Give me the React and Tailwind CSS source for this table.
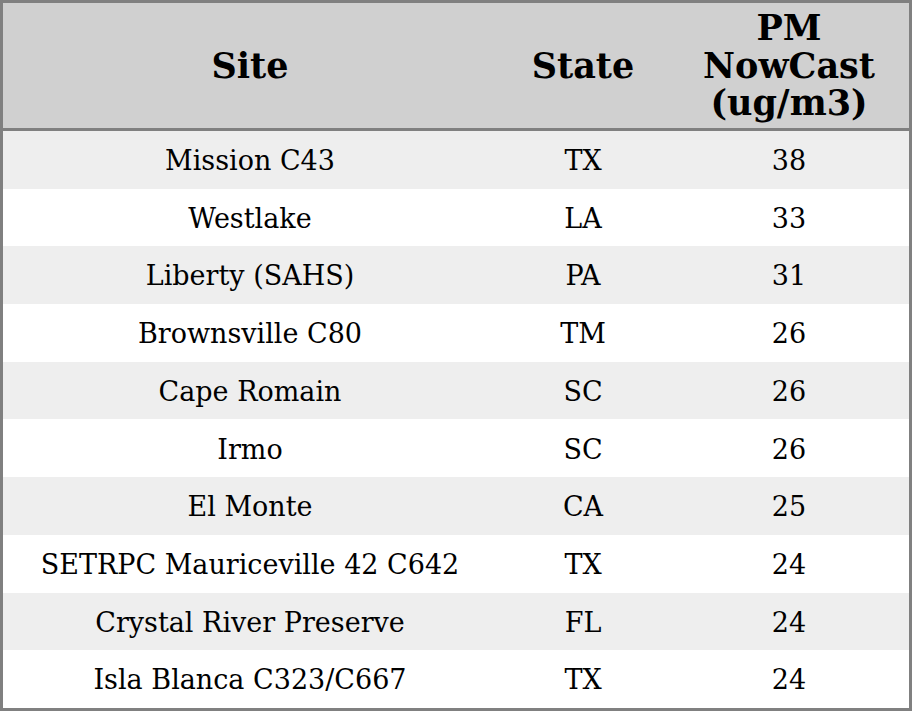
const rows = [
  ['Mission C43', 'TX', '38'],
  ['Westlake', 'LA', '33'],
  ['Liberty (SAHS)', 'PA', '31'],
  ['Brownsville C80', 'TM', '26'],
  ['Cape Romain', 'SC', '26'],
  ['Irmo', 'SC', '26'],
  ['El Monte', 'CA', '25'],
  ['SETRPC Mauriceville 42 C642', 'TX', '24'],
  ['Crystal River Preserve', 'FL', '24'],
  ['Isla Blanca C323/C667', 'TX', '24'],
];

export default function App() {
  return (
    <div className="w-[912px] h-[711px] bg-white text-black font-['DejaVu_Serif',serif]">
      <div className="w-[912px] border-[3px] border-[#808080] bg-white">
        <div className="grid grid-cols-[494px_172px_240px] h-[128px] bg-[#d0d0d0] border-b-[3px] border-[#808080] text-[35px] font-bold leading-[37.5px] items-center text-center">
          <div>Site</div>
          <div>State</div>
          <div>
            PM
            <br />
            NowCast
            <br />
            (ug/m3)
          </div>
        </div>
        {rows.map((r, i) => (
          <div
            key={i}
            className={`grid grid-cols-[494px_172px_240px] h-[57.7px] pt-[3px] items-center text-center text-[27px] ${
              i % 2 === 0 ? 'bg-[#eeeeee]' : 'bg-white'
            }`}
          >
            <div>{r[0]}</div>
            <div>{r[1]}</div>
            <div>{r[2]}</div>
          </div>
        ))}
      </div>
    </div>
  );
}
